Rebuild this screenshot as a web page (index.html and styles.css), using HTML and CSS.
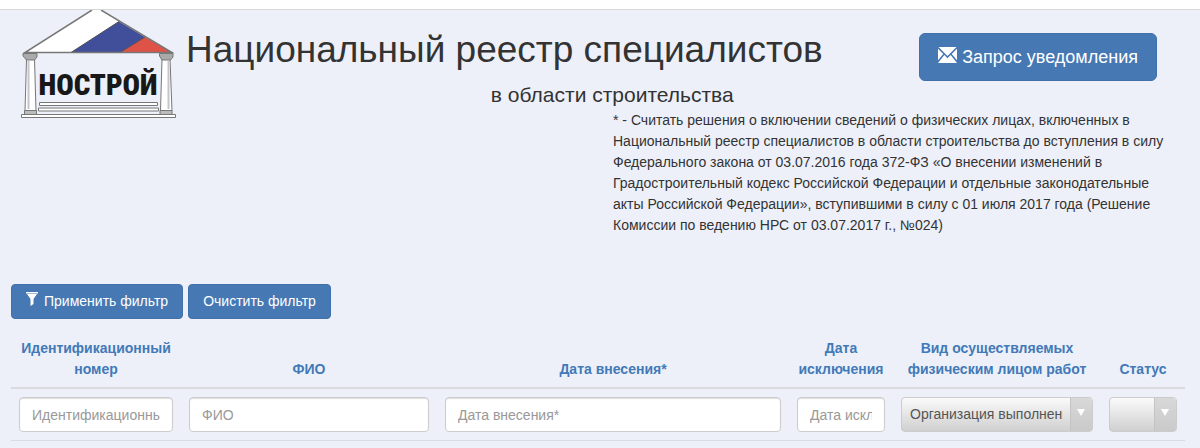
FILE: index.html
```html
<!DOCTYPE html>
<html lang="ru">
<head>
<meta charset="utf-8">
<meta name="viewport" content="width=device-width, initial-scale=1">
<title>Национальный реестр специалистов</title>
<link rel="stylesheet" href="styles.css">
</head>
<body>
<main class="page">
  <header class="header">
    <svg class="logo" viewBox="0 0 156 108" role="img" aria-label="НОСТРОЙ">
      <path d="M4 42.500 L71 0 H80 L151 42.500Z" fill="#fff"/>
      <path d="M98 11.500 L124 27 L99 42.500 H50Z" fill="#414f9b"/>
      <path d="M124 27 L151 42.500 H99Z" fill="#df5247"/>
      <path d="M50 42.500 L98 11.500 M99 42.500 L124 27" stroke="#4b4b55" fill="none"/>
      <path d="M71 0 L4 42.500 H151 L80 0" fill="none" stroke="#777" stroke-width="1.500"/>
      <g stroke="#777" fill="#fff">
        <path d="M5.500 49 H13.500 L15 101 H4Z M141 49 H149 L151 101 H139.500Z"/>
        <path d="M2 43.500 H16 V47 L13.500 50 H5.500 L2 46Z M138.500 43.500 H152 V47 L149.500 50 H141 L138.500 46Z" fill="#aaa"/>
        <path d="M3.500 100.500 H15.500 V104.500 H3.500Z M139 100.500 H151 V104.500 H139Z" fill="#bbb"/>
        <path d="M18.500 92.500 H136.500 V95.500 H18.500Z M17.500 98 H137.500 V101 H17.500Z M.500 104.500 H154.500 V107.500 H.500Z"/>
      </g>
      <path d="M7.500 51 V99 M147.500 51 V99" stroke="#c4c6cb" fill="none" stroke-width="2"/>
      <text class="logo-text" x="77" y="85" text-anchor="middle">НОСТРОЙ</text>
    </svg>
    <div class="titles">
      <h1 class="title">Национальный реестр специалистов</h1>
      <p class="subtitle">в области строительства</p>
    </div>
    <button class="btn btn-lg" type="button"><svg class="mail" viewBox="0 0 18 15" aria-hidden="true"><path d="M.500 0H17.500L9 8.500Z M0 1.500L5 6.500L0 12.500Z M18 1.500V12.500L13 6.500Z M6 7.500L9 10.500L12 7.500L18 15H0Z" fill="currentColor"/></svg>Запрос уведомления</button>
  </header>

  <p class="note">* - Считать решения о включении сведений о физических лицах, включенных в Национальный реестр специалистов в области строительства до вступления в силу Федерального закона от 03.07.2016 года 372-ФЗ «О внесении изменений в Градостроительный кодекс Российской Федерации и отдельные законодательные акты Российской Федерации», вступившими в силу с 01 июля 2017 года (Решение Комиссии по ведению НРС от 03.07.2017 г., №024)</p>

  <div class="actions">
    <button class="btn" type="button"><svg class="funnel" viewBox="0 0 12 14" aria-hidden="true"><path d="M0 0H12V1.500H0Z M1 2H11L7.500 7V12L4.500 14V7Z" fill="currentColor"/></svg>Применить фильтр</button>
    <button class="btn" type="button">Очистить фильтр</button>
  </div>

  <table class="grid">
    <colgroup>
      <col class="col-id"><col class="col-name"><col><col class="col-out"><col class="col-kind"><col class="col-status">
    </colgroup>
    <thead>
      <tr>
        <th scope="col"><label for="f-id">Идентификационный номер</label></th>
        <th scope="col"><label for="f-name">ФИО</label></th>
        <th scope="col"><label for="f-in">Дата внесения*</label></th>
        <th scope="col"><label for="f-out">Дата исключения</label></th>
        <th scope="col"><label for="f-kind">Вид осуществляемых физическим лицом работ</label></th>
        <th scope="col"><label for="f-status">Статус</label></th>
      </tr>
    </thead>
    <tbody>
      <tr>
        <td><input class="field" id="f-id" type="text" placeholder="Идентификационный номер"></td>
        <td><input class="field" id="f-name" type="text" placeholder="ФИО"></td>
        <td><input class="field" id="f-in" type="text" placeholder="Дата внесения*"></td>
        <td><input class="field" id="f-out" type="text" placeholder="Дата исключения"></td>
        <td><div class="picker"><select class="select" id="f-kind"><option>Организация выполнения работ</option></select></div></td>
        <td><div class="picker"><select class="select" id="f-status"><option></option></select></div></td>
      </tr>
    </tbody>
  </table>
</main>
</body>
</html>
```
FILE: styles.css
```css
* { box-sizing: border-box; }
body {
  margin: 0;
  padding-top: 9px;
  background: #fff;
  color: #333;
  font-family: "Liberation Sans", Arial, sans-serif;
  font-size: 14px;
  line-height: 21px;
}
.page {
  min-height: calc(100vh - 9px);
  padding: 0 15px 0 11px;
  background: #edf0f9;
  border-top: 1px solid #d8d8d8;
}
.header {
  display: flex;
  align-items: flex-start;
  padding: 0 28px 0 10px;
}
.logo { flex: none; width: 156px; height: 108px; margin-right: 9px; }
.logo-text {
  font-family: "Roboto Condensed", Roboto, sans-serif;
  font-size: 29px;
  font-weight: 900;
  fill: #181818;
}
.titles { padding-top: 20px; }
.title { margin: 0; font-size: 37px; font-weight: 400; line-height: 40px; }
.subtitle { margin: 13px 89px 0 0; font-size: 21px; line-height: 24px; text-align: right; }
.note { max-width: 572px; margin: -8px 0 48px auto; padding-right: 12px; }
.btn {
  height: 35px;
  padding: 0 14px;
  border: 1px solid #3f70aa;
  border-radius: 4px;
  background: #4678b3;
  color: #fff;
  font: inherit;
  white-space: nowrap;
}
.btn-lg { height: 48px; margin: 23px 0 0 auto; padding: 0 18px; border-radius: 6px; font-size: 18px; }
.mail { width: 19px; height: 16px; margin-right: 5px; }
.funnel { width: 12px; height: 14px; margin-right: 6px; }
.actions { display: flex; gap: 5px; margin-bottom: 12px; }
.grid { width: 100%; border-collapse: collapse; table-layout: fixed; }
.col-id { width: 170px; }
.col-name { width: 256px; }
.col-out { width: 104px; }
.col-kind { width: 208px; }
.col-status { width: 84px; }
.grid th {
  padding: 7px 4px;
  border-bottom: 2px solid #d9dbe0;
  color: #4279b7;
  vertical-align: bottom;
}
.grid td { padding: 8px; border-bottom: 1px solid #d9dbe0; }
.field, .select {
  display: block;
  width: 100%;
  height: 35px;
  border: 1px solid #ccc;
  border-radius: 4px;
  font: inherit;
}
.field { padding: 0 12px; background: #fff; box-shadow: inset 0 1px 1px #ddd; }
.field::placeholder { color: #999; opacity: 1; }
.picker { position: relative; }
.picker::before {
  content: "";
  position: absolute;
  inset: 1px 1px 1px auto;
  width: 21px;
  border-left: 1px solid #c4c4c4;
  border-radius: 0 4px 4px 0;
  background: linear-gradient(#d8d8d8, #cacaca);
  pointer-events: none;
}
.picker::after {
  content: "";
  position: absolute;
  top: 12px;
  right: 8px;
  border: 4px solid transparent;
  border-top: 7px solid #fff;
  border-bottom: 0;
  pointer-events: none;
}
.select {
  appearance: none;
  padding: 0 29px 0 8px;
  background: linear-gradient(#fafafa, #d0d0d0);
  color: #555;
}
```
